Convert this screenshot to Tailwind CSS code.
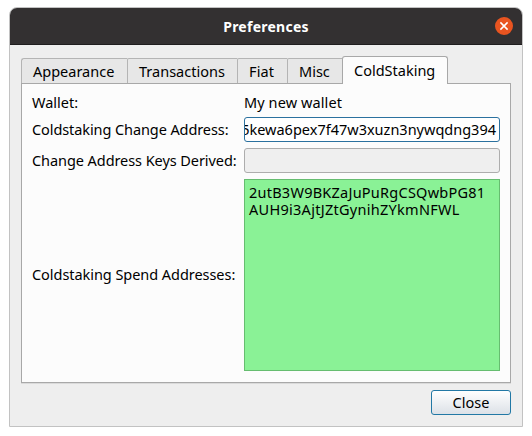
<!DOCTYPE html>
<html lang="en">
<head>
<meta charset="utf-8">
<title>Preferences</title>
<script src="https://cdn.jsdelivr.net/npm/@tailwindcss/browser@4"></script>
</head>
<body class="bg-white w-[532px] h-[436px] overflow-hidden pl-[9px] pt-[7px] font-['Noto_Sans',sans-serif] text-[14.5px] leading-[17px] text-black whitespace-nowrap">
<div class="w-[514px] h-[420px] border border-[#c2c2c2] rounded-t-[8px] bg-[#eeeeee] overflow-hidden flex flex-col">
  <header class="h-[37px] shrink-0 bg-[#333031] border-b border-[#1f1d1e] flex items-center relative">
    <h1 class="flex-1 text-center text-white font-bold text-[14px] tracking-[0.25px] pt-px">Preferences</h1>
    <button aria-label="Close window" class="absolute right-[9px] top-[9px] size-[18px]">
      <svg viewBox="0 0 18 18" class="size-[18px] block"><circle cx="9" cy="9" r="9" fill="#e95420"/><path d="M5.4 5.4l7.2 7.2M12.6 5.4l-7.2 7.2" stroke="#fff" stroke-width="1.5" fill="none"/></svg>
    </button>
  </header>
  <div class="pl-[11px] pt-[11px]">
    <nav class="flex items-end h-[27px]">
      <div class="w-[106px] h-[25px] border-t border-l border-[#b4b4b4] rounded-tl-[3px] bg-[#e7e7e7] pt-[4px] pl-[11px]">Appearance</div>
      <div class="w-[110px] h-[25px] border-t border-l border-[#b4b4b4] rounded-tl-[2px] bg-[#e7e7e7] pt-[4px] pl-[11px]">Transactions</div>
      <div class="w-[50px] h-[25px] border-t border-l border-[#b4b4b4] rounded-tl-[2px] bg-[#e7e7e7] pt-[4px] pl-[11px] tracking-[0.1px]">Fiat</div>
      <div class="w-[55px] h-[25px] border-t border-l border-[#b4b4b4] rounded-tl-[2px] bg-[#e7e7e7] pt-[4px] pl-[11px]">Misc</div>
      <div class="w-[106px] h-[28px] -mb-px relative border-t border-x border-[#a8a8a8] rounded-t-[3px] bg-[#fcfcfc] pt-[5px] pl-[11px]">ColdStaking</div>
    </nav>
    <main class="w-[490px] h-[300px] border border-[#a8a8a8] bg-[#fcfcfc] shadow-[0_1px_0_#dadada] pl-[10px] pt-[10px] grid grid-cols-[212px_256px] grid-rows-[17px_31px_31px_198px] content-start">
      <div class="leading-[16px]">Wallet:</div>
      <div class="leading-[16px] tracking-[0.1px]">My new wallet</div>
      <div class="mt-[6px] pt-[4px] tracking-[-0.09px]">Coldstaking Change Address:</div>
      <div class="mt-[6px] h-[25px] border border-[#2b719f] rounded-[3px] bg-white pr-[3px] flex justify-end items-center overflow-hidden">5kewa6pex7f47w3xuzn3nywqdng394</div>
      <div class="mt-[6px] pt-[4px] tracking-[-0.07px]">Change Address Keys Derived:</div>
      <div class="mt-[6px] h-[25px] border border-[#adadad] rounded-[3px] bg-[#efefef]"></div>
      <div class="mt-[6px] h-[190px] flex items-center tracking-[-0.05px]">Coldstaking Spend Addresses:</div>
      <div class="mt-[6px] h-[192px] border border-[#66bd70] bg-[#8af296] pl-[4px] pt-[4px]"><span class="tracking-[0.24px]">2utB3W9BKZaJuPuRgCSQwbPG81</span><br><span class="tracking-[0.28px]">AUH9i3AjtJZtGynihZYkmNFWL</span></div>
    </main>
    <button class="block ml-[410px] mt-[7px] w-[80px] h-[25px] border border-[#2278a5] rounded-[3px] bg-linear-to-b from-white to-[#dce1e7]">Close</button>
  </div>
</div>
</body>
</html>
